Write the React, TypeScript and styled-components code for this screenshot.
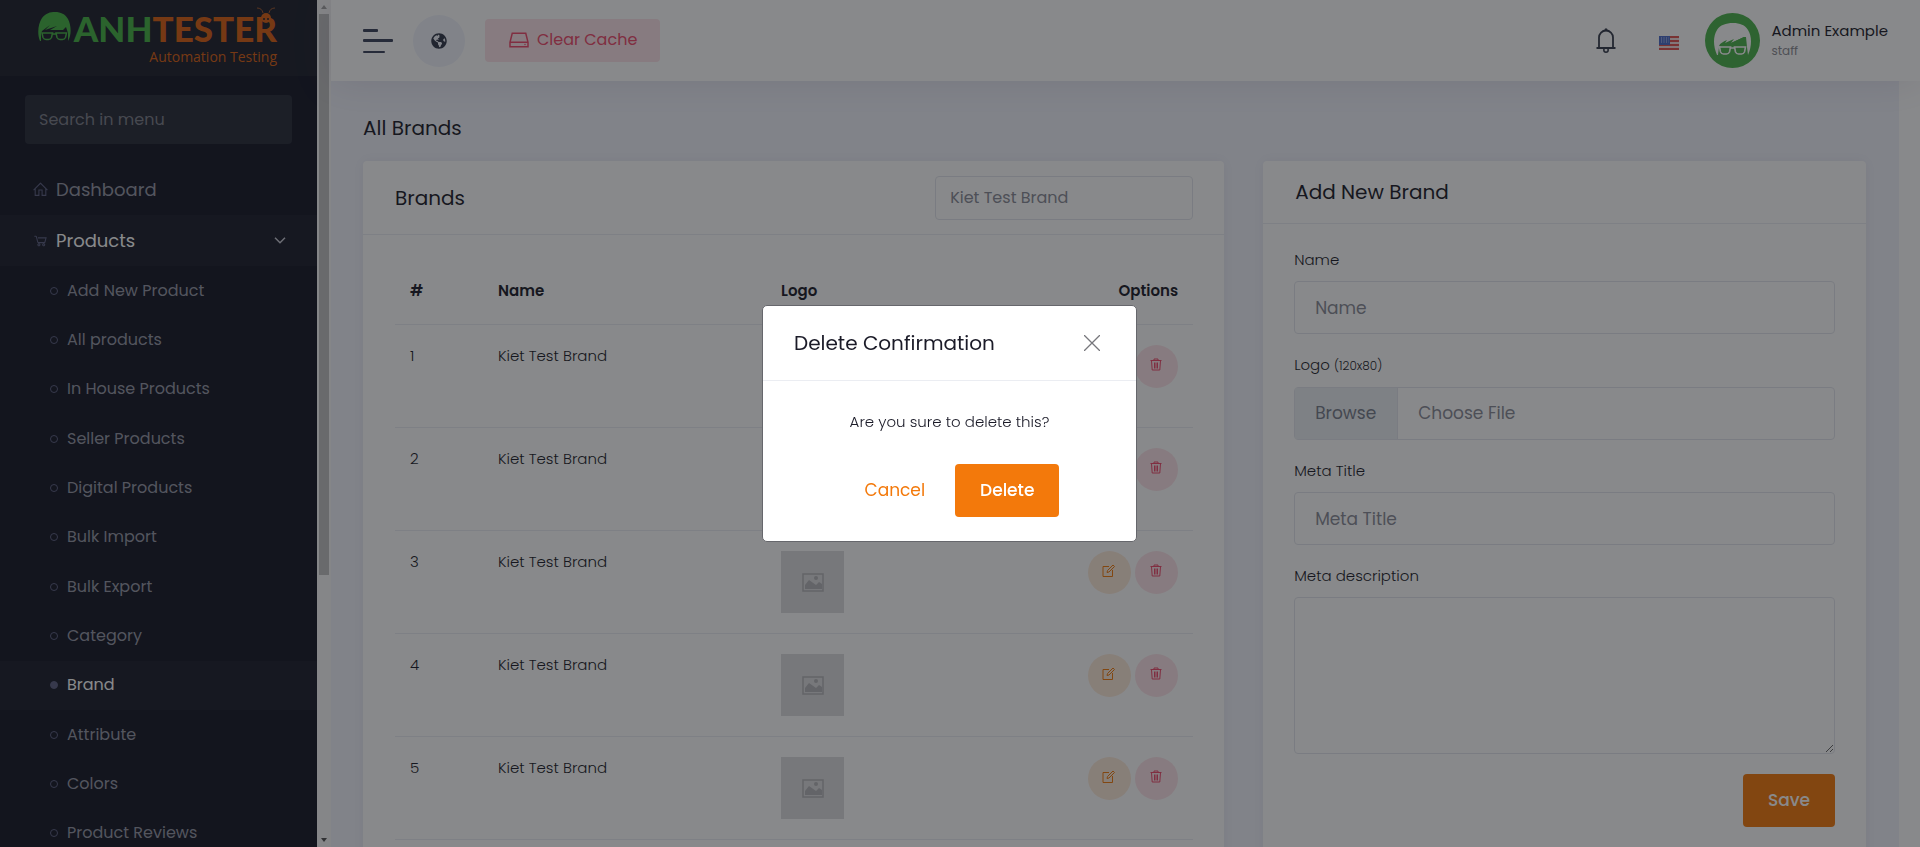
import React from 'react';
import styled, { createGlobalStyle, css } from 'styled-components';
import {
  LiaHomeSolid,
  LiaShoppingCartSolid,
  LiaHddSolid,
} from 'react-icons/lia';
import { FaGlobeAmericas } from 'react-icons/fa';

const GlobalStyle = createGlobalStyle`
  *, *::before, *::after { box-sizing: border-box; }
  body {
    margin: 0;
    overflow: hidden;
    background: #ffffff;
    color: #1b1b28;
    font-family: Poppins, Inter, "Open Sans", sans-serif;
    font-size: 15px;
    line-height: 22px;
  }
  button, input, textarea { font-family: inherit; }
  h1, h2, p, ul { margin: 0; padding: 0; }
  ul { list-style: none; }
  a { color: inherit; text-decoration: none; }
`;

const Shell = styled.div`
  display: flex;
  height: 100vh;
  overflow: hidden;
`;

/* ---------- Sidebar ---------- */

const Sidebar = styled.aside`
  flex: 0 0 317px;
  overflow: hidden;
  background: #141625;
  color: #a2a3b7;
`;

const LogoBar = styled.a`
  display: flex;
  align-items: flex-start;
  height: 76px;
  padding: 12px 40px 0 38px;
  background: #1c1f2b;
`;

const Wordmark = styled.span`
  display: flex;
  flex-direction: column;
  align-items: flex-end;
  flex: 1;
`;

const WordmarkMain = styled.span`
  font-family: Lato, sans-serif;
  font-size: 35px;
  font-weight: 900;
  line-height: 32px;
  color: #44b243;
`;

const Orange = styled.span`
  color: #da5f10;
`;

const WordmarkSub = styled.span`
  font-family: "Open Sans", sans-serif;
  font-size: 14px;
  line-height: 20px;
  margin-top: 3px;
  color: #da5f10;
`;

const MenuSearch = styled.input`
  display: block;
  width: calc(100% - 50px);
  height: 49px;
  margin: 19px 25px 20px;
  padding: 0 14px;
  border: 0;
  border-radius: 4px;
  background: #272a37;
  color: #a2a3b7;
  font-size: 16px;
  &::placeholder { color: #7c7f89; opacity: 1; }
`;

const MenuLink = styled.a<{ $active?: boolean }>`
  display: flex;
  align-items: center;
  height: 51px;
  padding: 0 31px 0 32px;
  font-size: 18px;
  color: ${(p) => (p.$active ? '#ffffff' : '#9496a4')};
  background: ${(p) => (p.$active ? '#1a1c2a' : 'transparent')};
  svg { color: #5c5f80; }
  svg + span { margin-left: 7px; flex: 1; }
  span + svg { color: #c8c9d4; }
`;

const SubMenu = styled.ul`
  display: grid;
  grid-auto-rows: 1fr;
  min-height: 592px;
`;

const SubLink = styled.a<{ $active?: boolean }>`
  display: flex;
  align-items: center;
  gap: 9px;
  height: 100%;
  padding-left: 50px;
  font-size: 16px;
  color: ${(p) => (p.$active ? '#ffffff' : '#9496a4')};
  background: ${(p) => (p.$active ? '#1a1c2a' : 'transparent')};
  &::before {
    content: '';
    width: 8px;
    height: 8px;
    border: 1px solid #5c5f80;
    border-radius: 50%;
    background: ${(p) => (p.$active ? '#5c5f80' : 'transparent')};
  }
`;

const ScrollTrack = styled.div`
  display: flex;
  flex-direction: column;
  align-items: center;
  justify-content: space-between;
  flex: 0 0 14px;
  padding: 5px 0;
  background: #f8f8f8;
`;

const ScrollThumb = styled.div`
  flex: 0 0 67%;
  width: 10px;
  margin: 5px 0 auto;
  background: #c1c1c1;
`;

/* ---------- Header ---------- */

const Main = styled.div`
  flex: 1;
  min-width: 0;
`;

const Header = styled.header`
  position: relative;
  display: flex;
  align-items: center;
  height: 81px;
  padding: 0 32px;
  background: #ffffff;
  box-shadow: 0 0 40px rgba(82, 63, 105, 0.14);
`;

const IconButton = styled.button`
  display: flex;
  padding: 0;
  border: 0;
  background: none;
  color: #343a4a;
  cursor: pointer;
`;

const GlobeLink = styled.a`
  display: flex;
  align-items: center;
  justify-content: center;
  width: 52px;
  height: 52px;
  margin: 0 20px;
  border-radius: 50%;
  background: #f0f3fb;
  color: #303648;
`;

const ClearCache = styled.button`
  display: flex;
  align-items: center;
  gap: 6px;
  height: 43px;
  padding: 0 23px 2px 22px;
  border: 0;
  border-radius: 4px;
  background: #fce3e8;
  color: #ef486a;
  font-size: 16px;
  cursor: pointer;
`;

const HeaderRight = styled.div`
  display: flex;
  align-items: center;
  margin-left: auto;
`;

const Flag = styled.span`
  display: flex;
  margin: 5px 26px 0 43px;
`;

const Profile = styled.a`
  display: flex;
  align-items: center;
  gap: 11px;
`;

const ProfileText = styled.span`
  display: flex;
  flex-direction: column;
  font-size: 15px;
  line-height: 20px;
  small { font-size: 12px; color: #8b8c92; }
`;

/* ---------- Content ---------- */

const Content = styled.main`
  min-height: 100%;
  margin-right: 21px;
  padding: 31px 33px 32px 32px;
  background: #f1f3fb;
`;

const PageTitle = styled.h1`
  margin-bottom: 17px;
  font-size: 20px;
  font-weight: 400;
  line-height: 32px;
`;

const Columns = styled.div`
  display: grid;
  grid-template-columns: minmax(0, 10fr) minmax(0, 7fr);
  gap: 39px;
  align-items: start;
`;

const Card = styled.section`
  min-height: 760px;
  border-radius: 4px;
  background: #ffffff;
  box-shadow: 0 0 13px rgba(82, 63, 105, 0.08);
`;

const CardHeader = styled.div<{ $tall?: boolean }>`
  display: flex;
  align-items: center;
  justify-content: space-between;
  height: ${(p) => (p.$tall ? '74px' : '63px')};
  padding: 0 31px 0 32px;
  border-bottom: 1px solid #ebedf2;
`;

const CardTitle = styled.h2`
  font-size: 20px;
  font-weight: 400;
  line-height: 30px;
`;

const fieldBase = css`
  display: block;
  width: 100%;
  border: 1px solid #e2e5ec;
  border-radius: 4px;
  background: transparent;
  color: #898b96;
  font-size: 17px;
  outline: none;
  &::placeholder { color: #898b96; opacity: 1; }
`;

const BrandSearch = styled.input`
  ${fieldBase}
  width: 258px;
  height: 44px;
  padding: 0 14px;
  font-size: 16px;
`;

const TableWrap = styled.div`
  padding: 25px 31px 25px 32px;
`;

const Table = styled.table`
  width: 100%;
  border-collapse: separate;
  border-spacing: 0;
  table-layout: fixed;
  th, td {
    padding: 20px 15px;
    border-bottom: 1px solid #ebedf2;
    text-align: left;
    vertical-align: top;
    font-weight: 300;
    line-height: 22px;
  }
  th { height: 65px; font-weight: 600; }
  td { height: 103px; }
  th:nth-child(1) { width: 88px; }
  th:nth-child(2) { width: 283px; }
  th:last-child { text-align: right; }
`;

const Thumb = styled.span`
  display: flex;
  align-items: center;
  justify-content: center;
  width: 63px;
  height: 62px;
  background: #dcdcde;
`;

const Actions = styled.div`
  display: flex;
  justify-content: flex-end;
  gap: 4px;
`;

const RoundButton = styled.button<{ $tone: 'edit' | 'remove' }>`
  display: flex;
  align-items: flex-start;
  justify-content: center;
  width: 43px;
  height: 43px;
  padding: 13px 2px 0 0;
  border: 0;
  border-radius: 50%;
  background: ${(p) => (p.$tone === 'edit' ? '#fdead9' : '#fce3e8')};
  color: ${(p) => (p.$tone === 'edit' ? '#f27a0a' : '#ef486a')};
  cursor: pointer;
`;

const Form = styled.form`
  display: flex;
  flex-direction: column;
  padding: 25px 31px 31px;
`;

const Field = styled.div`
  margin-bottom: 20px;
`;

const Label = styled.label`
  display: block;
  margin-bottom: 10px;
  font-size: 15px;
  font-weight: 300;
  line-height: 22px;
  small { font-size: 12px; }
`;

const TextInput = styled.input`
  ${fieldBase}
  height: 53px;
  padding: 0 20px;
`;

const FileBox = styled.label`
  ${fieldBase}
  display: flex;
  height: 53px;
  line-height: 51px;
  cursor: pointer;
`;

const HiddenFile = styled.input`
  width: 0;
  height: 0;
  opacity: 0;
  position: absolute;
`;

const BrowseTag = styled.span`
  padding: 0 21px 0 20px;
  border-right: 1px solid #e2e5ec;
  background: #ebeff2;
  color: #777c8a;
`;

const FileName = styled.span`
  padding: 0 20px;
`;

const TextArea = styled.textarea`
  ${fieldBase}
  height: 157px;
  padding: 12px 20px;
  resize: both;
`;

const PrimaryButton = styled.button`
  height: 53px;
  padding: 0 25px 2px;
  border: 0;
  border-radius: 4px;
  background: #f3790b;
  color: #ffffff;
  font-size: 17px;
  font-weight: 500;
  cursor: pointer;
`;

const FormFooter = styled.div`
  display: flex;
  justify-content: flex-end;
`;

/* ---------- Modal ---------- */

const Backdrop = styled.div`
  position: fixed;
  inset: 0;
  display: flex;
  align-items: center;
  justify-content: center;
  padding-right: 21px;
  background: rgba(18, 20, 24, 0.5);
`;

const Dialog = styled.div`
  width: 375px;
  border: 1px solid #66676c;
  border-radius: 5px;
  background: #ffffff;
  overflow: hidden;
`;

const DialogHeader = styled.div`
  display: flex;
  align-items: center;
  justify-content: space-between;
  height: 75px;
  padding: 0 36px 0 31px;
  border-bottom: 1px solid #ebedf2;
`;

const DialogBody = styled.div`
  padding: 30px 31px 24px;
  font-weight: 300;
  text-align: center;
`;

const DialogActions = styled.div`
  display: flex;
  align-items: center;
  justify-content: center;
  margin-top: 31px;
`;

const LinkButton = styled.button`
  height: 53px;
  padding: 0 30px 2px 25px;
  border: 0;
  background: none;
  color: #f3790b;
  font-size: 17px;
  cursor: pointer;
`;

/* ---------- Drawings ---------- */

const HairFace = ({ width, color }: { width: number; color: string }) => (
  <svg width={width} height={(width * 30) / 33} viewBox="0 0 33 30" aria-hidden="true">
    <path
      fill={color}
      d="M2 29C-1 22 0 12 4 6 8 1 12 0 17 0c6 0 10 2 13 7 3 6 4 15 0 22l0-8-2-6-3 3-13 0 7-4-12 4 5-5-8 6-1 3 0 7Z"
    />
    <path
      fill="none"
      stroke={color}
      strokeWidth="1.5"
      d="M4 21h10.500l-1 4.500q-1 2-3 2H8q-2 0-3-2ZM18 21h10.500l-1 4.500q-1 2-3 2h-2.500q-2 0-3-2ZM14 22h5"
    />
  </svg>
);

const AntFeelers = styled.svg`
  position: absolute;
  top: 0;
  right: 1px;
`;

const LastLetter = styled.span`
  position: relative;
`;

const AvatarPic = () => (
  <svg width="55" height="55" viewBox="0 0 55 55" aria-hidden="true">
    <circle cx="27.500" cy="27.500" r="27.500" fill="#4ab24a" />
    <path
      fill="#fff"
      d="M12 42C8 33 8 23 12 17c3-5 9-7 16-7s12 2 15 7c4 6 4 16 0 25l-1-8-1-10-2 0-13 6-12 4-1 8Z"
    />
    <path fill="#4ab24a" d="M14 33c1-3 4-4 8-6l-2 3 9-4-3 4 13-6 2 10Z" />
    <path
      fill="#4ab24a"
      stroke="#fff"
      strokeWidth="1.600"
      d="M14.500 34h11l-1 5q-1 2-3 2h-3q-2 0-3-2ZM29.500 34h11l-1 5q-1 2-3 2h-3q-2 0-3-2ZM25 35h5"
    />
  </svg>
);

const UsFlag = () => (
  <svg width="20" height="14" viewBox="0 0 20 14" aria-label="English" role="img">
    <rect width="20" height="14" fill="#f3dcdc" />
    {[0, 4, 8, 12].map((y) => (
      <rect key={y} y={y} width="20" height="2" fill="#e0534f" />
    ))}
    <rect width="11" height="9" fill="#4a6bc8" />
    {[2, 4, 6].map((y) => (
      <path key={y} stroke="#cfd8f4" strokeDasharray="1 1.500" d={`M2 ${y}h8`} />
    ))}
  </svg>
);

const Placeholder = () => (
  <svg width="22" height="19" viewBox="0 0 22 19" aria-hidden="true">
    <rect x="1" y="1" width="20" height="17" fill="none" stroke="#b4b4b8" strokeWidth="1.500" />
    <path fill="#b4b4b8" d="M3 16v-4l4-5 7 5 3-3 3 2v5Z" />
    <circle cx="14" cy="5" r="2" fill="#b4b4b8" />
  </svg>
);

const BellIcon = () => (
  <svg width="20" height="25" viewBox="0 0 20 25" fill="none" stroke="currentColor" aria-hidden="true">
    <path strokeWidth="1.800" d="M3 20V9.500a7 7 0 0 1 14 0V20M.500 20h19" />
    <circle cx="10" cy="22" r="2.200" strokeWidth="1.500" />
    <circle cx="10" cy="1.800" r="1.500" fill="currentColor" stroke="none" />
  </svg>
);

const TrashIcon = () => (
  <svg width="12" height="13" viewBox="0 0 12 13" fill="none" stroke="currentColor" aria-hidden="true">
    <path d="M.500 2.500h11M4 2.500V1h4v1.500M1.500 2.500l.700 9.500h7.600l.700-9.500M4.500 4.500v6M6 4.500v6M7.500 4.500v6" />
  </svg>
);

const PencilSquare = () => (
  <svg width="13" height="13" viewBox="0 0 13 13" fill="none" stroke="currentColor" aria-hidden="true">
    <path d="M7 2.500H1v10h9.500V6" />
    <path d="M5 8.500l.500-2 5.500-5.500 1.500 1.500L7 8Z" />
  </svg>
);

const ChevronDown = () => (
  <svg width="12" height="7" viewBox="0 0 12 7" fill="none" stroke="currentColor" aria-hidden="true">
    <path strokeWidth="1.500" d="M1 .800l5 5 5-5" />
  </svg>
);

const Caret = ({ down, color }: { down?: boolean; color: string }) => (
  <svg width="6" height="4" viewBox="0 0 6 4" aria-hidden="true">
    <path fill={color} d={down ? 'M0 0h6L3 4Z' : 'M0 4h6L3 0Z'} />
  </svg>
);

const MenuBars = () => (
  <svg width="30" height="24" viewBox="0 0 30 24" aria-hidden="true">
    <rect width="15" height="3" rx="1" fill="#3b425a" />
    <rect y="10" width="30" height="3" rx="1" fill="#3b425a" />
    <rect y="22" width="22" height="2" rx="1" fill="#3b425a" />
  </svg>
);

const CloseMark = () => (
  <svg width="16" height="16" viewBox="0 0 16 16" aria-hidden="true">
    <path stroke="#77777c" strokeWidth="1.300" d="M0 0l16 16M16 0L0 16" />
  </svg>
);

const subItems = [
  'Add New Product',
  'All products',
  'In House Products',
  'Seller Products',
  'Digital Products',
  'Bulk Import',
  'Bulk Export',
  'Category',
  'Brand',
  'Attribute',
  'Colors',
  'Product Reviews',
];

const brands = [1, 2, 3, 4, 5];

export default function App() {
  return (
    <>
      <GlobalStyle />
      <Shell>
        <Sidebar>
          <LogoBar href="#">
            <HairFace width={33} color="#44b243" />
            <Wordmark>
              <WordmarkMain>
                ANH
                <Orange>
                  TESTE
                  <LastLetter>
                    R
                    <AntFeelers width="20" height="18" viewBox="0 0 20 18" aria-hidden="true">
                      <path fill="none" stroke="#a0562a" d="M1 1q5 0 6 5M19 1q-5 0-6 5" />
                      <circle cx="10" cy="11" r="5" fill="#da5f10" />
                      <circle cx="8" cy="12" r="1" fill="#1c1f2b" />
                      <circle cx="12" cy="12" r="1" fill="#1c1f2b" />
                    </AntFeelers>
                  </LastLetter>
                </Orange>
              </WordmarkMain>
              <WordmarkSub>Automation Testing</WordmarkSub>
            </Wordmark>
          </LogoBar>
          <MenuSearch placeholder="Search in menu" aria-label="Search in menu" />
          <nav>
            <MenuLink href="#">
              <LiaHomeSolid size={17} />
              <span>Dashboard</span>
            </MenuLink>
            <MenuLink href="#" $active>
              <LiaShoppingCartSolid size={17} />
              <span>Products</span>
              <ChevronDown />
            </MenuLink>
            <SubMenu>
              {subItems.map((item) => (
                <li key={item}>
                  <SubLink href="#" $active={item === 'Brand'}>
                    {item}
                  </SubLink>
                </li>
              ))}
            </SubMenu>
          </nav>
        </Sidebar>
        <ScrollTrack>
          <Caret color="#a3a3a3" />
          <ScrollThumb />
          <Caret down color="#505050" />
        </ScrollTrack>

        <Main>
          <Header>
            <IconButton aria-label="Toggle menu">
              <MenuBars />
            </IconButton>
            <GlobeLink href="#" aria-label="Browse website">
              <FaGlobeAmericas size={16} />
            </GlobeLink>
            <ClearCache>
              <LiaHddSolid size={24} />
              Clear Cache
            </ClearCache>
            <HeaderRight>
              <IconButton aria-label="Notifications">
                <BellIcon />
              </IconButton>
              <Flag>
                <UsFlag />
              </Flag>
              <Profile href="#">
                <AvatarPic />
                <ProfileText>
                  Admin Example
                  <small>staff</small>
                </ProfileText>
              </Profile>
            </HeaderRight>
          </Header>

          <Content>
            <PageTitle>All Brands</PageTitle>
            <Columns>
              <Card>
                <CardHeader $tall>
                  <CardTitle>Brands</CardTitle>
                  <BrandSearch defaultValue="Kiet Test Brand" aria-label="Search brands" />
                </CardHeader>
                <TableWrap>
                  <Table>
                    <thead>
                      <tr>
                        <th>#</th>
                        <th>Name</th>
                        <th>Logo</th>
                        <th>Options</th>
                      </tr>
                    </thead>
                    <tbody>
                      {brands.map((n) => (
                        <tr key={n}>
                          <td>{n}</td>
                          <td>Kiet Test Brand</td>
                          <td>
                            <Thumb>
                              <Placeholder />
                            </Thumb>
                          </td>
                          <td>
                            <Actions>
                              <RoundButton $tone="edit" aria-label="Edit">
                                <PencilSquare />
                              </RoundButton>
                              <RoundButton $tone="remove" aria-label="Delete">
                                <TrashIcon />
                              </RoundButton>
                            </Actions>
                          </td>
                        </tr>
                      ))}
                    </tbody>
                  </Table>
                </TableWrap>
              </Card>

              <Card>
                <CardHeader>
                  <CardTitle>Add New Brand</CardTitle>
                </CardHeader>
                <Form onSubmit={(e) => e.preventDefault()}>
                  <Field>
                    <Label htmlFor="name">Name</Label>
                    <TextInput id="name" placeholder="Name" />
                  </Field>
                  <Field>
                    <Label htmlFor="logo">
                      Logo <small>(120x80)</small>
                    </Label>
                    <FileBox>
                      <HiddenFile id="logo" type="file" />
                      <BrowseTag>Browse</BrowseTag>
                      <FileName>Choose File</FileName>
                    </FileBox>
                  </Field>
                  <Field>
                    <Label htmlFor="meta-title">Meta Title</Label>
                    <TextInput id="meta-title" placeholder="Meta Title" />
                  </Field>
                  <Field>
                    <Label htmlFor="meta-description">Meta description</Label>
                    <TextArea id="meta-description" />
                  </Field>
                  <FormFooter>
                    <PrimaryButton type="submit">Save</PrimaryButton>
                  </FormFooter>
                </Form>
              </Card>
            </Columns>
          </Content>
        </Main>
      </Shell>

      <Backdrop>
        <Dialog role="dialog" aria-modal="true" aria-labelledby="dialog-title">
          <DialogHeader>
            <CardTitle id="dialog-title">Delete Confirmation</CardTitle>
            <IconButton aria-label="Close">
              <CloseMark />
            </IconButton>
          </DialogHeader>
          <DialogBody>
            <p>Are you sure to delete this?</p>
            <DialogActions>
              <LinkButton>Cancel</LinkButton>
              <PrimaryButton>Delete</PrimaryButton>
            </DialogActions>
          </DialogBody>
        </Dialog>
      </Backdrop>
    </>
  );
}
